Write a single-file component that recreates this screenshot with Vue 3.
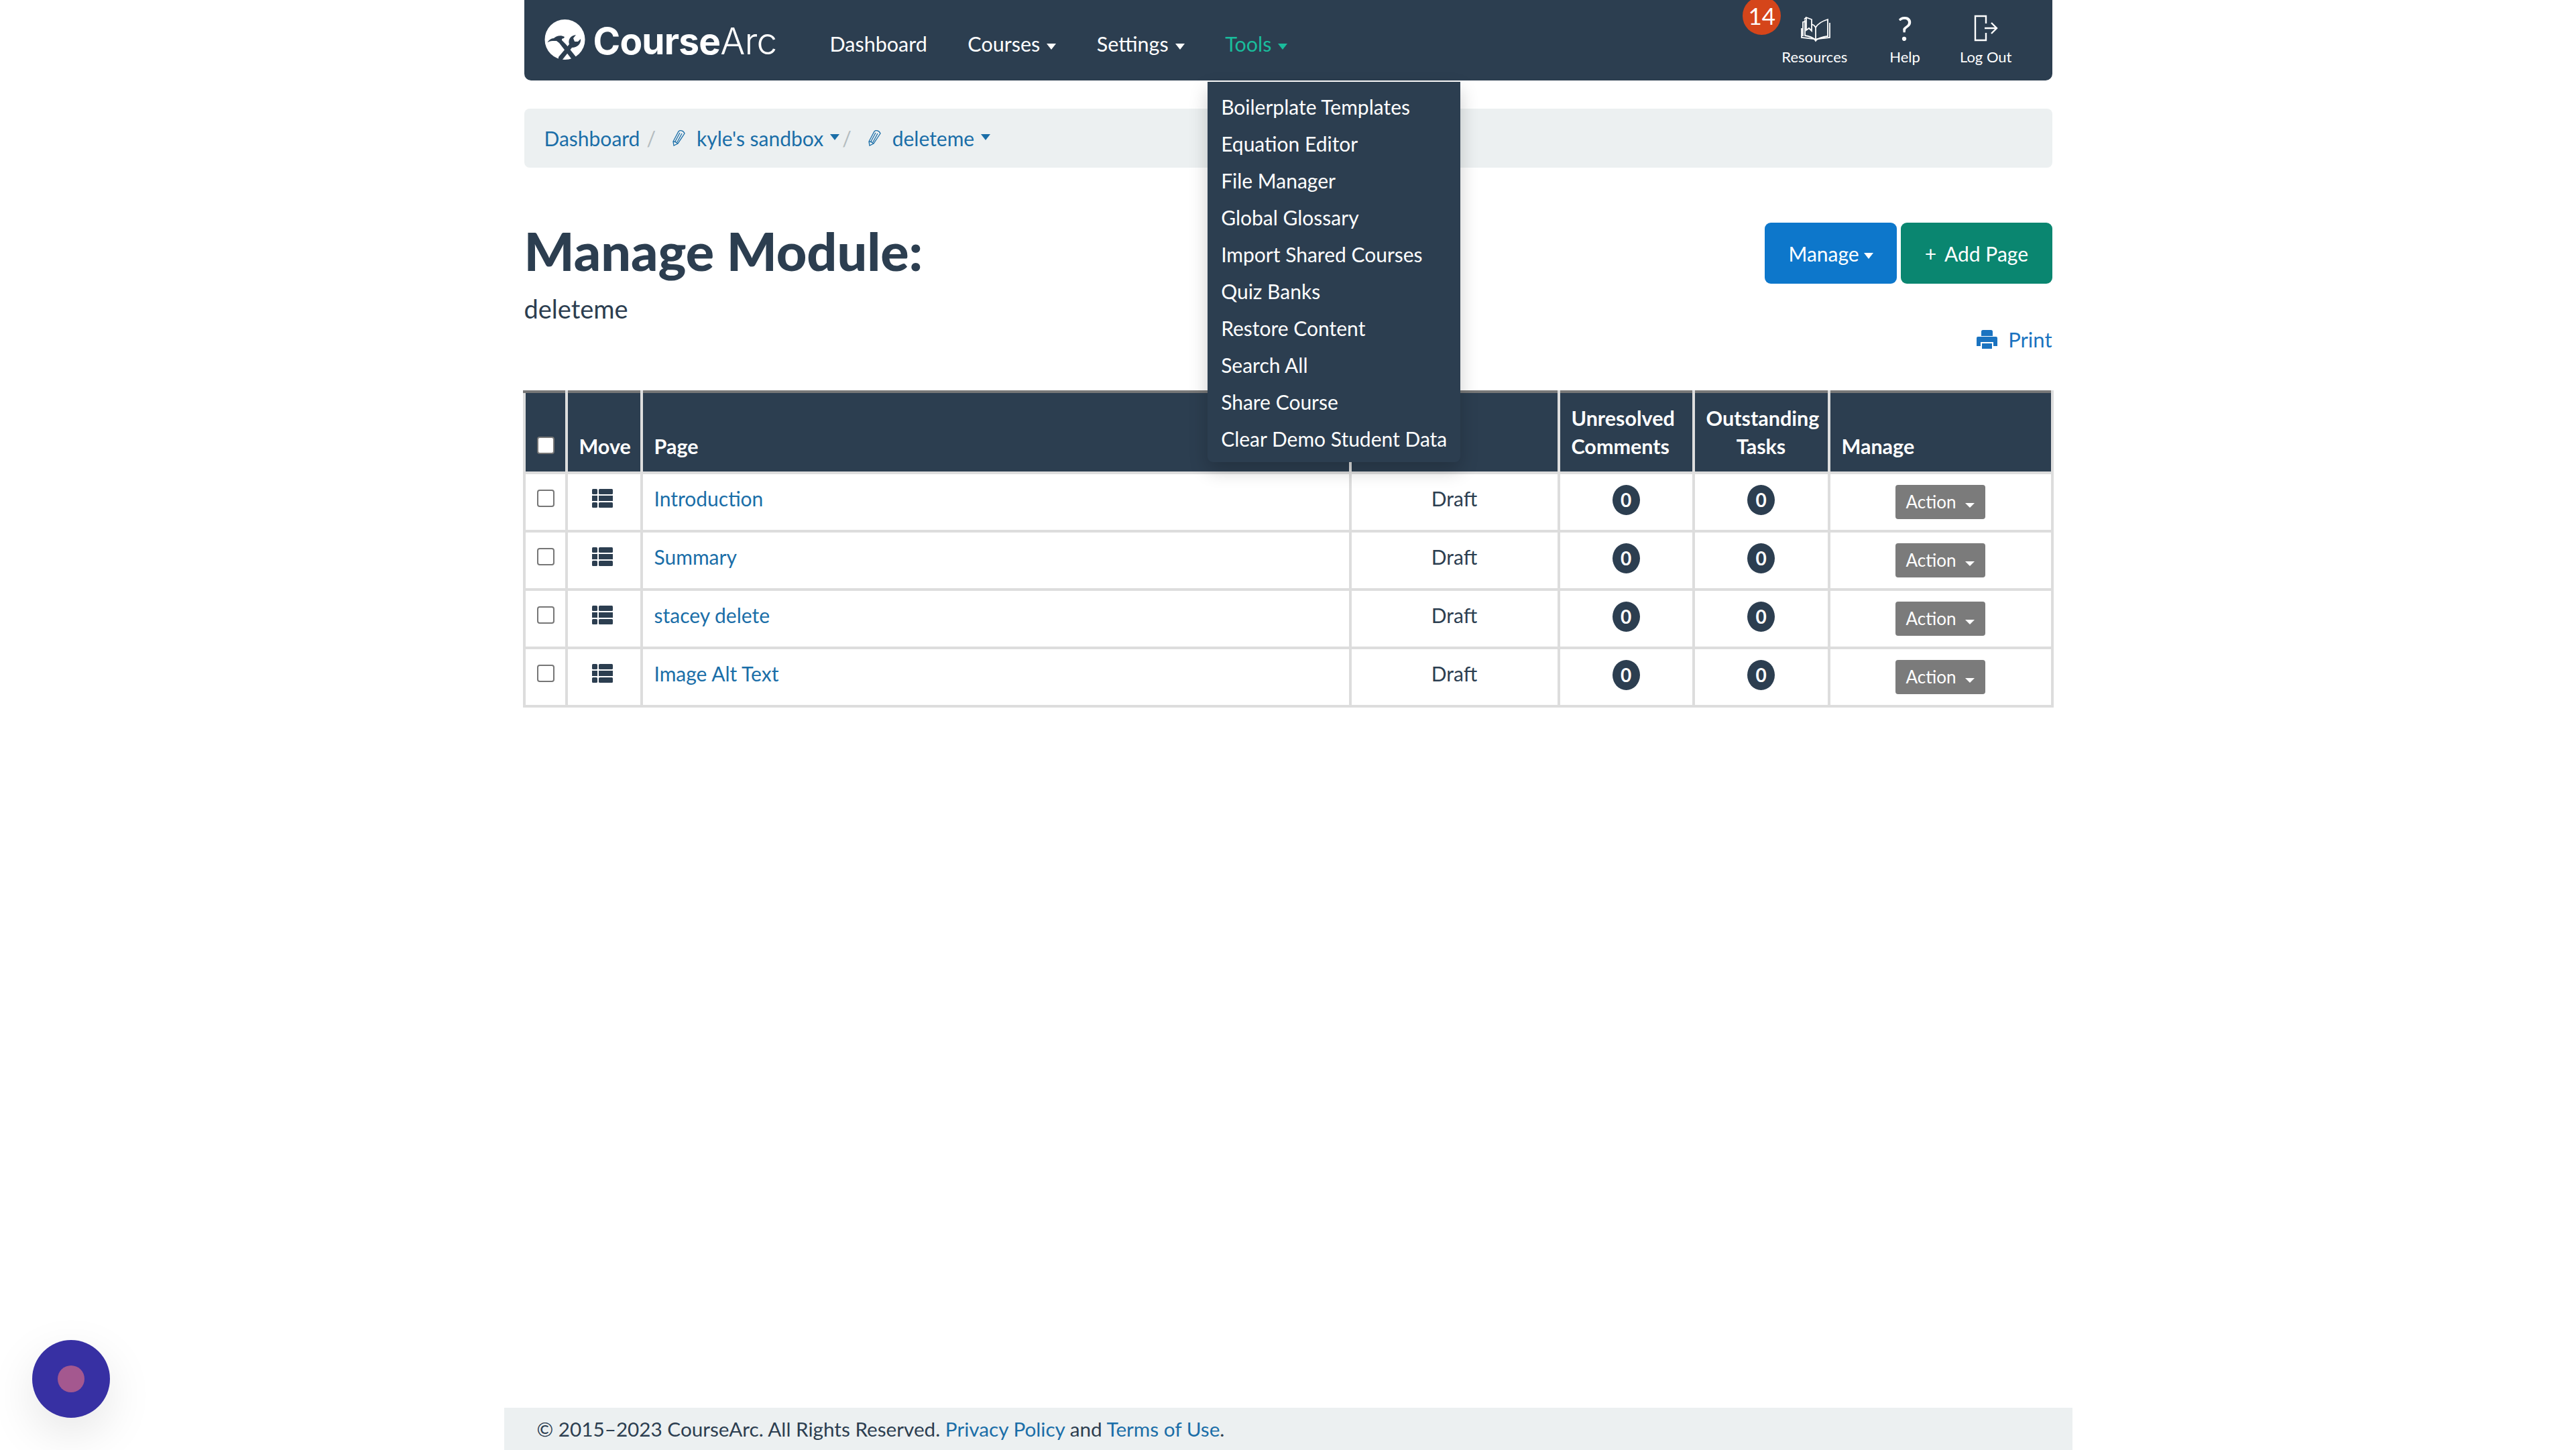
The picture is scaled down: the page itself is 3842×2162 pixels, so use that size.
<template>
  <div class="page">
    <nav class="topbar">
      <a class="brand">
        <svg class="brand-mark" viewBox="6 4 62 62">
          <circle fill="#fff" cx="36.500" cy="35" r="30" />
          <path fill="#2c3e50" d="M10.500 39.500C12 36 16 33 20 33c4-4 11-5 16-2l-1 2c-2 0-3.500 1-3 3l6 6 16 20-6 4-20-26-4-3h-6c-3 0-6 1-7.500 2.500z" />
          <path fill="#2c3e50" d="M27 61l16-19c-2-6 1-13 10-14l-4 5 2 5h5l4-4c1 7-5 13-13 13L32 66h-5z" />
        </svg>
        <span class="brand-name"><b>Course</b>Arc</span>
      </a>
      <ul class="menu">
        <li><a>Dashboard</a></li>
        <li><a>Courses<i class="caret"></i></a></li>
        <li><a>Settings<i class="caret"></i></a></li>
        <li class="open">
          <a class="active">Tools<i class="caret"></i></a>
          <ul class="dropdown">
            <li v-for="tool in tools" :key="tool">{{ tool }}</li>
          </ul>
        </li>
      </ul>
      <div class="nav-right">
        <span class="notify">14</span>
        <a class="nav-icon resources">
          <svg viewBox="0 0 60 54" fill="none" stroke="#fff" stroke-width="1.800">
            <path d="M29 25c4-7 11-10 18-12v25c-7 1-14 3-18 6z" />
            <path d="M29 25c-1-2-3-4-6-5M29 44c-4-4-9-6-16-7V14" />
            <path d="M15 10l8 3v17l-4-4-4 3z" />
            <path d="M13 16l-3 1v21M15 10l-3 3" />
            <path d="M8 26v14l19 2 2 3 2-3 19-2V18" />
          </svg>
          <span>Resources</span>
        </a>
        <a class="nav-icon help">
          <span class="question">?</span>
          <span>Help</span>
        </a>
        <a class="nav-icon logout">
          <svg viewBox="0 0 36 40" fill="none" stroke="#fff" stroke-width="2.400">
            <path d="M18 13V2H2v36h16V27" />
            <path d="M16 20h18M26 12l8 8-8 8" />
          </svg>
          <span>Log Out</span>
        </a>
      </div>
    </nav>

    <ol class="crumbs">
      <li><a>Dashboard</a><span class="sep">/</span></li>
      <li>
        <svg class="pencil" viewBox="11 9 22 28" fill="none" stroke="#1a6ea8" stroke-width="1.300">
          <path d="M21 13c2-2 7-2 9 3L20 31l-6 3-1-6z" />
          <path d="M23 15l-7 13M26 16l-7 13M13 28c2 0 5 1 7 3" />
        </svg>
        <a>kyle's sandbox</a><i class="caret tight"></i><span class="sep">/</span>
      </li>
      <li>
        <svg class="pencil" viewBox="11 9 22 28" fill="none" stroke="#1a6ea8" stroke-width="1.300">
          <path d="M21 13c2-2 7-2 9 3L20 31l-6 3-1-6z" />
          <path d="M23 15l-7 13M26 16l-7 13M13 28c2 0 5 1 7 3" />
        </svg>
        <a>deleteme</a><i class="caret"></i>
      </li>
    </ol>

    <header class="head">
      <div>
        <h1>Manage Module:</h1>
        <p class="module-name">deleteme</p>
      </div>
      <div class="head-side">
        <div class="actions">
          <button class="btn blue">Manage<i class="caret"></i></button>
          <button class="btn green"><span class="plus">+</span>Add Page</button>
        </div>
        <a class="print">
          <svg viewBox="0 0 31 28" fill="#1a73c0">
            <path d="M7 2.500A2.500 2.500 0 0 1 9.500 0h12A2.500 2.500 0 0 1 24 2.500V9H7z" />
            <path d="M0 12a2 2 0 0 1 2-2h27a2 2 0 0 1 2 2v12h-6v-6H6v6H0z" />
            <path d="M8 20h15v8H8z" />
          </svg>
          Print
        </a>
      </div>
    </header>

    <table class="pages">
      <colgroup>
        <col class="c-check" /><col class="c-move" /><col class="c-page" /><col class="c-status" />
        <col class="c-comments" /><col class="c-tasks" /><col class="c-manage" />
      </colgroup>
      <thead>
        <tr>
          <th><input type="checkbox" class="check head-check" /></th>
          <th>Move</th>
          <th>Page</th>
          <th></th>
          <th>Unresolved<br />Comments</th>
          <th class="center">Outstanding<br />Tasks</th>
          <th>Manage</th>
        </tr>
      </thead>
      <tbody>
        <tr v-for="page in pages" :key="page">
          <td><input type="checkbox" class="check" /></td>
          <td class="center">
            <svg class="move-icon" viewBox="0 0 31 28" fill="#2c3e50">
              <rect width="8" height="8" rx="1.500" />
              <rect x="10" width="21" height="8" rx="1.500" />
              <rect y="10" width="8" height="8" />
              <rect x="10" y="10" width="21" height="8" />
              <rect y="20" width="8" height="8" rx="1.500" />
              <rect x="10" y="20" width="21" height="8" rx="1.500" />
            </svg>
          </td>
          <td><a>{{ page }}</a></td>
          <td class="center">Draft</td>
          <td class="center"><span class="count">0</span></td>
          <td class="center"><span class="count">0</span></td>
          <td class="center"><button class="action">Action<i class="caret"></i></button></td>
        </tr>
      </tbody>
    </table>

    <footer class="foot">
      © 2015–2023 CourseArc. All Rights Reserved. <a>Privacy Policy</a> and <a>Terms of Use</a>.
    </footer>

    <div class="launcher"><span></span></div>
  </div>
</template>

<script setup>
// Menu entries and table rows
const tools = [
  'Boilerplate Templates',
  'Equation Editor',
  'File Manager',
  'Global Glossary',
  'Import Shared Courses',
  'Quiz Banks',
  'Restore Content',
  'Search All',
  'Share Course',
  'Clear Demo Student Data',
];

const pages = ['Introduction', 'Summary', 'stacey delete', 'Image Alt Text'];
</script>

<style>
html,
body {
  margin: 0;
  background: #fff;
}
</style>

<style scoped>
.page {
  position: relative;
  width: 3842px;
  height: 2162px;
  overflow: hidden;
  display: flex;
  flex-direction: column;
  align-items: center;
  box-sizing: border-box;
  font-family: Lato, "Liberation Sans", sans-serif;
  font-size: 30px;
  color: #2c3e50;
  background: #fff;
}

a {
  color: #1a6ea8;
  text-decoration: none;
}

ul,
ol {
  list-style: none;
  margin: 0;
  padding: 0;
}

.caret {
  display: inline-block;
  width: 0;
  height: 0;
  margin-left: 10px;
  vertical-align: middle;
  border-top: 9px solid currentColor;
  border-left: 7px solid transparent;
  border-right: 7px solid transparent;
}

.topbar {
  display: flex;
  align-items: center;
  flex: none;
  width: 2279px;
  height: 120px;
  padding: 0 60px 0 30px;
  box-sizing: border-box;
  background: #2c3e50;
  border-radius: 0 0 10px 10px;
  color: #fff;
}

.brand {
  display: flex;
  align-items: center;
  gap: 11px;
  width: 426px;
  color: #fff;
  margin-top: 2px;
}

.brand-mark {
  width: 62px;
  height: 62px;
  flex: none;
  margin-top: -4px;
}

.brand-name {
  font-family: Inter, Lato, sans-serif;
  font-size: 55px;
  font-weight: 300;
  letter-spacing: -0.8px;
}

.brand-name b {
  font-weight: 700;
}

.menu {
  display: flex;
  gap: 60.500px;
  margin-top: 10px;
  font-size: 30.500px;
}

.menu > li {
  position: relative;
}

.menu a {
  color: #fff;
}

.menu a.active {
  color: #1abc9c;
}

.dropdown {
  position: absolute;
  top: 75px;
  left: -26px;
  z-index: 5;
  width: 377px;
  padding: 10px 0 7px;
  background: #2c3e50;
  border-radius: 0 0 8px 8px;
  box-shadow: 0 12px 28px rgba(0, 0, 0, 0.2);
  color: #fff;
  font-size: 30px;
}

.dropdown li {
  padding: 0 20px;
  line-height: 55px;
  white-space: nowrap;
}

.nav-right {
  display: flex;
  align-items: flex-start;
  margin-left: auto;
  position: relative;
  align-self: stretch;
  font-size: 22px;
}

.notify {
  position: absolute;
  left: -56px;
  top: -5px;
  width: 57px;
  height: 57px;
  border-radius: 50%;
  background: #d5451a;
  font-size: 35px;
  line-height: 57px;
  text-align: center;
  color: #fff;
}

.nav-icon {
  display: flex;
  flex-direction: column;
  align-items: center;
  justify-content: space-between;
  height: 98px;
  padding-top: 22px;
  box-sizing: border-box;
  color: #fff;
  white-space: nowrap;
}

.nav-icon svg {
  display: block;
  height: 40px;
}

.resources svg {
  width: 60px;
  height: 54px;
  margin: -6px -3px -8px 3px;
}

.question {
  font-size: 50px;
  line-height: 40px;
  font-weight: 400;
}

.help {
  margin-left: 63px;
}

.logout {
  margin-left: 59px;
}

.resources {
  margin-left: 2px;
}

.crumbs {
  display: flex;
  align-items: center;
  flex: none;
  width: 2279px;
  height: 88px;
  margin-top: 42px;
  padding: 0 30px;
  box-sizing: border-box;
  background: #ecf0f1;
  border-radius: 8px;
}

.crumbs li {
  display: flex;
  align-items: center;
}

.crumbs .caret {
  color: #1a6ea8;
  margin-bottom: 4px;
}

.crumbs .caret.tight {
  margin-right: -6px;
}

.sep {
  margin: 0 24px 0 10px;
  color: #b4bcbf;
}

.pencil {
  width: 22px;
  height: 28px;
  margin-right: 15px;
}

.head {
  display: flex;
  justify-content: space-between;
  flex: none;
  width: 2279px;
  margin-top: 82px;
}

h1 {
  margin: -4px 0 0;
  font-size: 79px;
  line-height: 91px;
  font-weight: 900;
}

.module-name {
  margin: 18px 0 0;
  font-size: 38px;
  line-height: 46px;
}

.head-side {
  display: flex;
  flex-direction: column;
  align-items: flex-end;
}

.actions {
  display: flex;
  gap: 6px;
}

.btn {
  height: 91px;
  border: 0;
  border-radius: 9px;
  color: #fff;
  font: inherit;
  padding: 0 35.500px;
}

.btn .caret {
  margin-left: 7px;
}

.blue {
  background: #0d77cb;
}

.green {
  background: #0a8670;
}

.plus {
  margin-right: 12px;
}

.print {
  display: flex;
  align-items: center;
  gap: 16px;
  margin-top: 65px;
  color: #1a73c0;
  font-size: 31px;
  line-height: 36px;
}

.print svg {
  width: 31px;
  height: 28px;
}

.pages {
  flex: none;
  width: 2279px;
  margin-top: 58px;
  table-layout: fixed;
  border-collapse: collapse;
  box-sizing: border-box;
}

.c-check { width: 63px; }
.c-move { width: 112px; }
.c-page { width: 1057px; }
.c-status { width: 311px; }
.c-comments { width: 201px; }
.c-tasks { width: 202px; }
.c-manage { width: 333px; }

.pages th,
.pages td {
  border: 4px solid #ddd;
  padding: 0 17px;
  box-sizing: border-box;
}

.pages th {
  height: 121px;
  padding-bottom: 17px;
  vertical-align: bottom;
  text-align: left;
  background: #2c3e50;
  color: #fff;
  font-size: 30.500px;
  font-weight: 700;
  line-height: 42px;
  white-space: nowrap;
  border-top-color: #777;
}

.pages td {
  height: 87px;
  padding-bottom: 11px;
}

.pages .center {
  text-align: center;
}

.check {
  appearance: none;
  display: block;
  width: 26px;
  height: 26px;
  margin: 0;
  background: #fff;
  border: 2px solid #767676;
  border-radius: 4px;
  box-sizing: border-box;
}

.head-check {
  margin-bottom: 9px;
}

.move-icon {
  display: block;
  position: relative;
  left: -2px;
  width: 31px;
  height: 28px;
  margin: 0 auto;
}

.count {
  display: inline-block;
  min-width: 41px;
  height: 45px;
  margin-top: 5px;
  line-height: 45px;
  border-radius: 50%;
  background: #2c3e50;
  color: #fff;
  font-size: 28px;
  font-weight: 700;
  text-align: center;
}

.action {
  width: 134px;
  height: 51px;
  margin-top: 10px;
  padding: 0;
  border: 0;
  border-radius: 4px;
  background: #7b7b7b;
  color: #fff;
  font: inherit;
  font-size: 26px;
  vertical-align: middle;
}

.action .caret {
  margin-left: 14px;
  margin-top: 5px;
  border-top-width: 7px;
  border-left-width: 7px;
  border-right-width: 7px;
}

.foot {
  flex: none;
  width: 2339px;
  height: 63px;
  margin-top: auto;
  padding: 0 49px;
  box-sizing: border-box;
  background: #ecf0f1;
  font-size: 29.700px;
  line-height: 63px;
}

.launcher {
  position: absolute;
  left: 48px;
  top: 1998px;
  display: flex;
  align-items: center;
  justify-content: center;
  width: 116px;
  height: 116px;
  border-radius: 50%;
  background: #3730a3;
  box-shadow: 0 24px 70px rgba(0, 0, 0, 0.1);
}

.launcher span {
  width: 40px;
  height: 40px;
  border-radius: 50%;
  background: #a4588f;
}
</style>
